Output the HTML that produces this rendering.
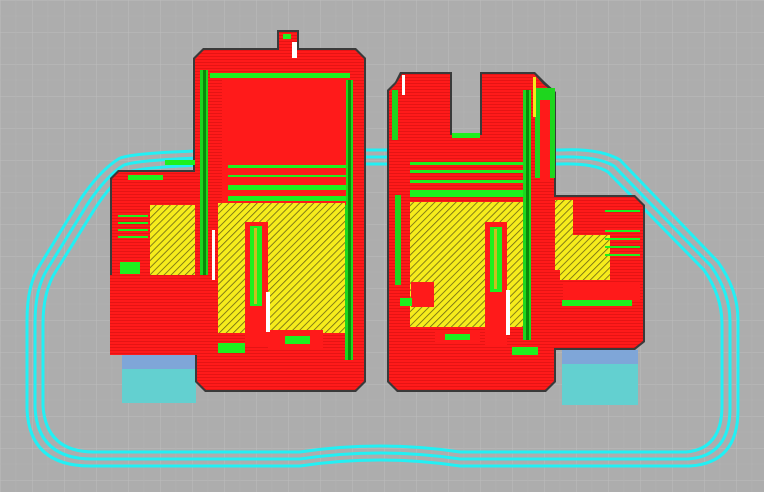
<!DOCTYPE html>
<html><head><style>
html,body{margin:0;padding:0;width:764px;height:492px;overflow:hidden;background:#adadad}
svg{display:block}
</style></head><body>
<svg width="764" height="492" viewBox="0 0 764 492" xmlns="http://www.w3.org/2000/svg">
<defs>
<pattern id="grid" width="32" height="32" patternUnits="userSpaceOnUse">
<path d="M0 0H32M0 0V32" stroke="#bdbdbd" stroke-width="1" fill="none"/>
<path d="M16 0V32M0 16H32" stroke="#b3b3b3" stroke-width="0.6" fill="none"/>
</pattern>
<pattern id="hatch" width="5" height="5" patternUnits="userSpaceOnUse" patternTransform="rotate(-45)">
<rect width="5" height="5" fill="#f6ec1c"/>
<rect width="5" height="0.8" fill="#6a6414"/>
</pattern>
<pattern id="lines" width="4" height="3" patternUnits="userSpaceOnUse">
<rect width="4" height="3" fill="#ff1a1a"/>
<rect width="4" height="0.6" y="2" fill="#d41010"/>
</pattern>
</defs>
<rect width="764" height="492" fill="url(#grid)"/>

<!-- cyan skirt -->
<g fill="none" stroke="#22f0f4" stroke-width="3">
<path d="M120 158 Q100 170 80 200 L40 265 Q27 285 27 320 L27 410 Q30 466 90 466 L300 466 Q380 454 460 466 L690 466 Q738 463 738 410 L738 320 Q738 290 718 262 L620 160 Q600 148 560 150 L370 150 Q150 148 120 158"/>
<path d="M124 165 Q106 176 87 205 L48 268 Q35 288 35 322 L35 408 Q38 459 92 459 L300 459 Q380 447 460 459 L688 459 Q730 456 730 408 L730 322 Q730 293 711 266 L614 166 Q597 156 560 157 L370 157 Q155 155 124 165"/>
<path d="M128 172 Q112 182 94 210 L56 271 Q43 291 43 324 L43 406 Q46 452 94 452 L300 452 Q380 440 460 452 L686 452 Q722 449 722 406 L722 324 Q722 296 704 270 L608 172 Q594 163 560 164 L370 164 Q160 162 128 172"/>
</g>
<!-- cyan base blocks -->
<rect x="122" y="355" width="74" height="48" fill="#63d0d0"/>
<rect x="122" y="355" width="74" height="14" fill="#7fa6d8"/>
<rect x="562" y="350" width="76" height="55" fill="#63d0d0"/>
<rect x="562" y="350" width="76" height="14" fill="#7fa6d8"/>

<!-- LEFT OBJECT -->
<path d="M110 178 L118 170 L193 170 L193 58 L203 48 L277 48 L277 30 L299 30 L299 48 L356 48 L366 58 L366 382 L356 392 L205 392 L195 382 L195 355 L118 355 L110 347 Z" fill="#3a3a3a"/>
<path d="M112 179 L119 172 L195 172 L195 59 L204 50 L279 50 L279 32 L297 32 L297 50 L355 50 L364 59 L364 381 L355 390 L206 390 L197 381 L197 353 L119 353 L112 346 Z" fill="url(#lines)"/>
<rect x="200" y="70" width="8" height="220" fill="#1ed61e"/>
<rect x="203" y="70" width="3" height="220" fill="#0a8a0a"/>
<rect x="210" y="73" width="140" height="5" fill="#1ef01e"/>
<rect x="345" y="80" width="8" height="280" fill="#1ed61e"/>
<rect x="348" y="80" width="3" height="280" fill="#0a8a0a"/>
<rect x="222" y="80" width="124" height="125" fill="#ff1a1a"/>
<rect x="228" y="165" width="118" height="3" fill="#1ef01e"/>
<rect x="228" y="175" width="118" height="2" fill="#1ef01e"/>
<rect x="228" y="185" width="118" height="5" fill="#1ef01e"/>
<rect x="228" y="196" width="118" height="5" fill="#1ef01e"/>
<rect x="218" y="203" width="127" height="130" fill="url(#hatch)"/>
<rect x="150" y="205" width="45" height="70" fill="url(#hatch)"/>
<rect x="245" y="222" width="23" height="125" fill="#ff1a1a"/>
<rect x="250" y="226" width="12" height="80" fill="#1ef01e"/>
<rect x="254" y="228" width="3" height="76" fill="#c8c020"/>
<rect x="268" y="330" width="55" height="20" fill="#ff1a1a"/>
<rect x="285" y="336" width="25" height="8" fill="#1ef01e"/>
<rect x="218" y="343" width="27" height="10" fill="#1ef01e"/>
<rect x="110" y="275" width="100" height="80" fill="url(#lines)"/>
<rect x="210" y="275" width="8" height="80" fill="url(#lines)"/>
<rect x="128" y="175" width="35" height="5" fill="#1ef01e"/>
<rect x="165" y="160" width="30" height="5" fill="#1ef01e"/>
<rect x="118" y="215" width="30" height="2" fill="#1ef01e"/>
<rect x="118" y="222" width="30" height="2" fill="#1ef01e"/>
<rect x="118" y="229" width="30" height="2" fill="#1ef01e"/>
<rect x="118" y="236" width="30" height="2" fill="#1ef01e"/>
<rect x="120" y="262" width="20" height="12" fill="#1ef01e"/>
<rect x="212" y="230" width="3" height="50" fill="#ffffff"/>
<rect x="266" y="292" width="4" height="40" fill="#ffffff"/>
<rect x="292" y="42" width="5" height="16" fill="#ffffff"/>
<rect x="283" y="34" width="8" height="5" fill="#1ef01e"/>

<!-- RIGHT OBJECT -->
<path d="M387 90 L395 82 L400 72 L452 72 L452 133 L480 133 L480 72 L535 72 L545 82 L556 92 L556 195 L635 195 L645 205 L645 342 L635 350 L556 350 L556 382 L546 392 L397 392 L387 382 Z" fill="#3a3a3a"/>
<path d="M389 91 L396 84 L402 74 L450 74 L450 135 L482 135 L482 74 L534 74 L543 84 L554 93 L554 197 L634 197 L643 206 L643 341 L634 348 L554 348 L554 381 L545 390 L398 390 L389 381 Z" fill="url(#lines)"/>
<rect x="452" y="133" width="28" height="5" fill="#1ef01e"/>
<rect x="392" y="90" width="6" height="50" fill="#1ed61e"/>
<rect x="395" y="195" width="6" height="90" fill="#1ed61e"/>
<rect x="410" y="162" width="115" height="3" fill="#1ef01e"/>
<rect x="410" y="170" width="115" height="3" fill="#1ef01e"/>
<rect x="410" y="180" width="115" height="3" fill="#1ef01e"/>
<rect x="410" y="190" width="115" height="7" fill="#1ef01e"/>
<rect x="410" y="202" width="120" height="125" fill="url(#hatch)"/>
<rect x="485" y="222" width="22" height="125" fill="#ff1a1a"/>
<rect x="490" y="227" width="12" height="65" fill="#1ef01e"/>
<rect x="494" y="229" width="3" height="60" fill="#c8c020"/>
<rect x="411" y="282" width="23" height="25" fill="#ff1a1a"/>
<rect x="435" y="330" width="45" height="12" fill="#ff1a1a"/>
<rect x="445" y="334" width="25" height="6" fill="#1ef01e"/>
<rect x="512" y="347" width="26" height="8" fill="#1ef01e"/>
<rect x="523" y="90" width="8" height="250" fill="#1ed61e"/>
<rect x="526" y="90" width="3" height="250" fill="#0a8a0a"/>
<rect x="535" y="88" width="20" height="90" fill="#1ed61e"/>
<rect x="540" y="100" width="10" height="80" fill="#ff1a1a"/>
<rect x="555" y="200" width="18" height="70" fill="url(#hatch)"/>
<rect x="560" y="235" width="50" height="45" fill="url(#hatch)"/>
<rect x="605" y="210" width="35" height="2" fill="#1ef01e"/>
<rect x="605" y="230" width="35" height="2" fill="#1ef01e"/>
<rect x="605" y="238" width="35" height="2" fill="#1ef01e"/>
<rect x="605" y="246" width="35" height="2" fill="#1ef01e"/>
<rect x="605" y="254" width="35" height="2" fill="#1ef01e"/>
<rect x="563" y="282" width="77" height="20" fill="#ff1a1a"/>
<rect x="562" y="300" width="70" height="6" fill="#1ef01e"/>
<rect x="506" y="290" width="4" height="45" fill="#ffffff"/>
<rect x="402" y="75" width="3" height="20" fill="#ffffff"/>
<rect x="533" y="77" width="3" height="40" fill="#f4ea18"/>
<rect x="400" y="298" width="12" height="8" fill="#1ef01e"/>
</svg>
</body></html>
